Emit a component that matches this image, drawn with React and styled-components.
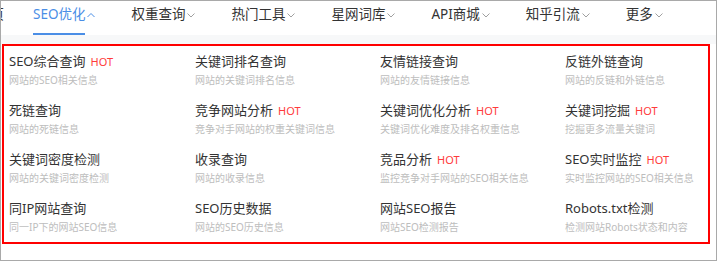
import React from "react";
import styled, { createGlobalStyle } from "styled-components";

const Global = createGlobalStyle`
  html, body { margin: 0; padding: 0; background: #fff; }
  body { font-family: "Noto Sans", "Noto Sans CJK SC", sans-serif; }
`;

const Frame = styled.div`
  width: 715px;
  height: 259px;
  border: 1px solid #a9a9a9;
  background: #fff;
  overflow: hidden;
`;

const NavBar = styled.nav`
  height: 34px;
  overflow: hidden;
`;

const NavTrack = styled.div`
  display: flex;
  align-items: flex-start;
  gap: 36px;
  margin-left: -24px;
  white-space: nowrap;
`;

const NavItem = styled.div`
  display: flex;
  align-items: flex-start;
  gap: 2px;
  color: ${(p) => (p.$active ? "#4a8ee6" : "#333")};
  font-size: 13.5px;
  margin-right: ${(p) => (p.$home ? "-7px" : "0")};
`;

const NavLabel = styled.span`
  line-height: 27px;
  height: 27px;
  padding-bottom: 5px;
  border-bottom: 2px solid ${(p) => (p.$active ? "#4a8ee6" : "transparent")};
`;

const Chevron = styled.svg`
  margin-top: 11px;
  flex: none;
`;

const Band = styled.div`
  height: 9px;
  background: #f7f8f9;
`;

const Panel = styled.div`
  width: 704px;
  margin-left: 1px;
  border: 2px solid #ff0000;
  padding: 6px 0 8px 5px;
  box-sizing: border-box;
  width: 708px;
  display: grid;
  grid-template-columns: 186px 185px 185px 1fr;
  row-gap: 14px;
`;

const Cell = styled.div`
  display: flex;
  flex-direction: column;
  min-width: 0;
`;

const Title = styled.div`
  font-size: 13px;
  line-height: 18px;
  height: 18px;
  color: #333;
  white-space: nowrap;
`;

const Hot = styled.span`
  font-size: 11px;
  color: #ff3b3b;
  margin-left: 5px;
`;

const Sub = styled.div`
  margin-top: 3px;
  font-size: 10px;
  line-height: 14px;
  height: 14px;
  color: #bdbdbd;
  white-space: nowrap;
`;

const nav = [
  { label: "首页", home: true },
  { label: "SEO优化", active: true },
  { label: "权重查询" },
  { label: "热门工具" },
  { label: "星网词库" },
  { label: "API商城" },
  { label: "知乎引流" },
  { label: "更多" },
];

const items = [
  ["SEO综合查询", "网站的SEO相关信息", true],
  ["关键词排名查询", "网站的关键词排名信息"],
  ["友情链接查询", "网站的友情链接信息"],
  ["反链外链查询", "网站的反链和外链信息"],
  ["死链查询", "网站的死链信息"],
  ["竞争网站分析", "竞争对手网站的权重关键词信息", true],
  ["关键词优化分析", "关键词优化难度及排名权重信息", true],
  ["关键词挖掘", "挖掘更多流量关键词", true],
  ["关键词密度检测", "网站的关键词密度检测"],
  ["收录查询", "网站的收录信息"],
  ["竞品分析", "监控竞争对手网站的SEO相关信息", true],
  ["SEO实时监控", "实时监控网站的SEO相关信息", true],
  ["同IP网站查询", "同一IP下的网站SEO信息"],
  ["SEO历史数据", "网站的SEO历史信息"],
  ["网站SEO报告", "网站SEO检测报告"],
  ["Robots.txt检测", "检测网站Robots状态和内容"],
];

function Caret({ up }) {
  return (
    <Chevron width="8" height="6" viewBox="0 0 8 6">
      <polyline
        points={up ? "0.5,5 4,1.5 7.5,5" : "0.5,1.5 4,5 7.5,1.5"}
        fill="none"
        stroke={up ? "#4a8ee6" : "#a0a0a0"}
        strokeWidth="1"
      />
    </Chevron>
  );
}

export default function App() {
  return (
    <>
      <Global />
      <Frame>
        <NavBar>
          <NavTrack>
            {nav.map((n) => (
              <NavItem key={n.label} $active={n.active} $home={n.home}>
                <NavLabel $active={n.active}>{n.label}</NavLabel>
                {!n.home && <Caret up={n.active} />}
              </NavItem>
            ))}
          </NavTrack>
        </NavBar>
        <Band />
        <Panel>
          {items.map(([t, s, hot]) => (
            <Cell key={t}>
              <Title>
                {t}
                {hot && <Hot>HOT</Hot>}
              </Title>
              <Sub>{s}</Sub>
            </Cell>
          ))}
        </Panel>
      </Frame>
    </>
  );
}
